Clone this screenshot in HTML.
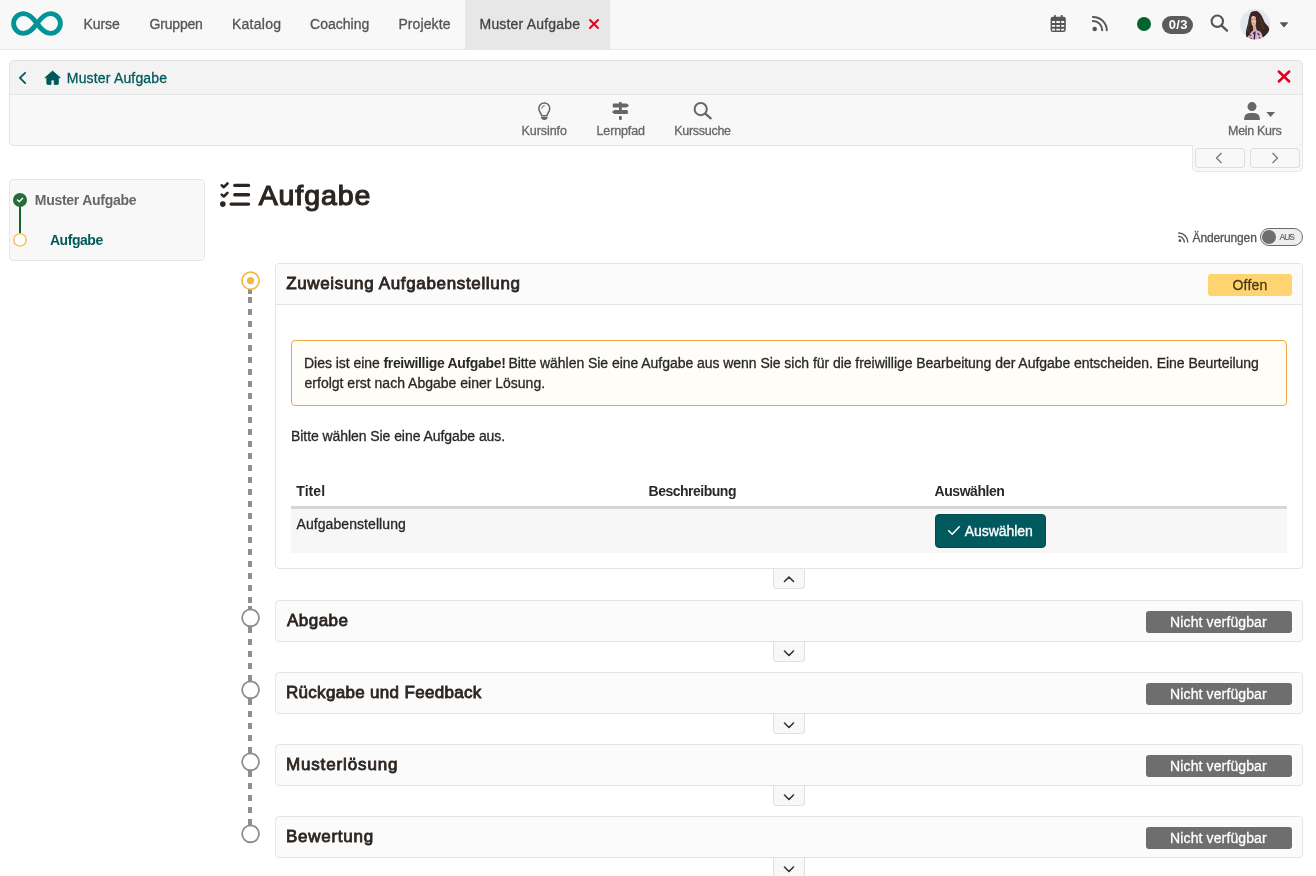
<!DOCTYPE html>
<html lang="de">
<head>
<meta charset="utf-8">
<title>Muster Aufgabe</title>
<style>
html,body{margin:0;padding:0}
body{width:1316px;height:876px;overflow:hidden;position:relative;background:#fff;font-family:"Liberation Sans",sans-serif;font-size:14px;color:#333}
.a{position:absolute;box-sizing:border-box}
.t{position:absolute;white-space:nowrap;line-height:20px;margin:0;padding:0;-webkit-text-stroke:0.3px}
svg{position:absolute;overflow:visible}
#L{position:absolute;left:0;top:0;width:1316px;height:876px;will-change:transform}
.b{font-weight:bold;-webkit-text-stroke:0}
#nav{left:0;top:0;width:1316px;height:50px;background:#f8f8f8;border-bottom:1px solid #e7e7e7}
#tab{left:465px;top:0;width:145px;height:49px;background:#e7e7e7}
#panel{left:9px;top:60px;width:1294px;height:86px;background:#f8f8f8;border:1px solid #e3e3e3;border-radius:4px}
#crumb{left:10px;top:61px;width:1292px;height:34px;background:#f3f3f3;border-bottom:1px solid #e3e3e3;border-radius:3px 3px 0 0}
#pn{left:1192px;top:145px;width:111px;height:27px;background:#f8f8f8;border:1px solid #e7e7e7;border-top:0;border-radius:0 0 5px 5px}
.pb{top:148px;width:50px;height:20px;border:1px solid #ddd;border-radius:3px;background:#f8f8f8}
#menu{left:9px;top:179px;width:196px;height:82px;background:#f8f8f8;border:1px solid #e7e7e7;border-radius:4px}
.box{left:275px;width:1028px;background:#fbfbfb;border:1px solid #e4e4e4;border-radius:4px}
.tg{left:773px;width:32px;height:20px;background:#f8f8f8;border:1px solid #e0e0e0;border-top:0;border-radius:0 0 4px 4px}
.badge{left:1146px;width:146px;height:22px;background:#6e6e6e;border-radius:3px}
.dash{left:248px;width:4px;background:repeating-linear-gradient(to bottom,#8f8f8f 0,#8f8f8f 6px,transparent 6px,transparent 12px)}
.circ{left:241px;width:19px;height:19px;border-radius:50%;border:2px solid #8b8b8b;background:#fff}
</style>
</head>
<body>
<div id="L">
<!-- top navigation -->
<div class="a" id="nav"></div>
<div class="a" id="tab"></div>
<svg style="left:11px;top:11px" width="52" height="25" viewBox="0 0 52 25"><path d="M26 12.5C20 4 16 2.6 12.6 2.6 7 2.6 2.6 7 2.6 12.5S7 22.4 12.6 22.4C16 22.4 20 21 26 12.5S36 2.6 39.4 2.6C45 2.6 49.4 7 49.4 12.5S45 22.4 39.4 22.4C36 22.4 32 21 26 12.5Z" fill="none" stroke="#029397" stroke-width="4.9" stroke-linejoin="round"/></svg>
<span class="t" id="n1" style="left:83.50px;top:14.01px;font-size:14px;color:#555;letter-spacing:-0.080px;">Kurse</span>
<span class="t" id="n2" style="left:149.50px;top:14.01px;font-size:14px;color:#555;letter-spacing:-0.185px;">Gruppen</span>
<span class="t" id="n3" style="left:232.00px;top:14.01px;font-size:14px;color:#555;letter-spacing:0.248px;">Katalog</span>
<span class="t" id="n4" style="left:310.00px;top:14.01px;font-size:14px;color:#555;letter-spacing:0.015px;">Coaching</span>
<span class="t" id="n5" style="left:398.40px;top:14.01px;font-size:14px;color:#555;letter-spacing:0.108px;">Projekte</span>
<span class="t" id="n6" style="left:479.55px;top:14.01px;font-size:14px;color:#444;letter-spacing:0.182px;">Muster Aufgabe</span>
<svg style="left:589px;top:19px" width="10" height="10" viewBox="0 0 10 10"><path d="M1 1L9 9M9 1L1 9" stroke="#e1001c" stroke-width="2" stroke-linecap="round"/></svg>
<svg style="left:1050px;top:14px" width="17" height="19" viewBox="0 0 17 19"><g fill="#555"><rect x="4.050" y="0.900" width="1.800" height="3.500" rx="0.600"/><rect x="10.850" y="0.900" width="1.800" height="3.500" rx="0.600"/><rect x="0.600" y="2.800" width="15.200" height="15.100" rx="2.200"/></g><g fill="#f8f8f8"><rect x="2.000" y="7.100" width="3.100" height="1.800" rx="0.300"/><rect x="2.000" y="11.000" width="3.100" height="1.800" rx="0.300"/><rect x="2.000" y="14.700" width="3.100" height="1.800" rx="0.300"/><rect x="6.300" y="7.100" width="3.600" height="1.800" rx="0.300"/><rect x="6.300" y="11.000" width="3.600" height="1.800" rx="0.300"/><rect x="6.300" y="14.700" width="3.600" height="1.800" rx="0.300"/><rect x="11.100" y="7.100" width="3.100" height="1.800" rx="0.300"/><rect x="11.100" y="11.000" width="3.100" height="1.800" rx="0.300"/><rect x="11.100" y="14.700" width="3.100" height="1.800" rx="0.300"/></g></svg>
<svg style="left:1092px;top:15px" width="17" height="17" viewBox="0 0 17 17"><circle cx="2.700" cy="13.900" r="2.250" fill="#555"/><path d="M0.900 5.900A9.300 9.300 0 0 1 10.200 15.200M0.900 2A13.900 13.200 0 0 1 14.800 15.200" fill="none" stroke="#555" stroke-width="2" stroke-linecap="round"/></svg>
<div class="a" style="left:1137px;top:17px;width:14px;height:14px;border-radius:50%;background:#05632f"></div>
<div class="a" style="left:1162px;top:16px;width:31px;height:18px;border-radius:9px;background:#5b5b5b"></div>
<svg style="left:1210px;top:14px" width="19" height="18" viewBox="0 0 19 18"><circle cx="7.3" cy="7.2" r="5.7" fill="none" stroke="#555" stroke-width="2.1"/><path d="M11.6 11.6L17 16.6" stroke="#555" stroke-width="2.3" stroke-linecap="round"/></svg>
<svg style="left:1240px;top:9px" width="31" height="31" viewBox="0 0 31 31"><defs><clipPath id="avc"><circle cx="15.200" cy="15.200" r="15.200"/></clipPath><filter id="avb" x="-20%" y="-20%" width="140%" height="140%"><feGaussianBlur stdDeviation="0.550"/></filter></defs><g clip-path="url(#avc)"><rect width="31" height="31" fill="#e3e8ee"/><g filter="url(#avb)"><path d="M10.500 4C12 1.800 17 1.300 19 3.500 22 6 23 10 24.500 13 26 16 29.500 17 29.300 21.500 29 25 26 28 24 31H7C5.500 27 5.500 22 7 18 8.500 14 8.500 8 10.500 4Z" fill="#3a2724"/><path d="M11.300 8.500C11.600 6.600 14.800 6.400 15.600 8.300 16.400 10.500 16.300 14 15.600 16.200 14.800 17.800 12.600 17.300 11.800 15.500 11.100 13.500 11 10.500 11.300 8.500Z" fill="#e9b9a6"/><path d="M12.800 16.500L15.600 16.200 16.800 21.500 14.500 23.500 13 21.500Z" fill="#dca996"/><path d="M6.500 31C7 26 9 22.500 12.500 21.500 15 21 18 21.500 20 22.500 22.500 24 23 28 23 31Z" fill="#d7b3c8"/><path d="M9 25L11 27M13 23.500L14.500 25.500M17.500 24L19.500 26.500M10 29L12.500 30.500M19 28.500L21 30" stroke="#5a3a52" stroke-width="1.300" fill="none"/><path d="M15 22.500L14.200 31" stroke="#2c2430" stroke-width="1.300"/><path d="M11.500 10.300H13M14.300 10.300H15.600" stroke="#5a3a35" stroke-width="0.700"/><path d="M12.600 14.300H14.600" stroke="#c9737a" stroke-width="0.800"/><path d="M12 17C10.500 19 9.500 21 7.500 23 6.500 25 6.500 27 7 29 9 26 11 23 13.300 21.300Z" fill="#3a2724"/><path d="M16.300 15C17.500 18 18 20 20.500 22.500 22 25 23 28 23.500 31H26V20L18 12Z" fill="#3a2724"/><path d="M20 9C22 13 21 17 24 20M9.500 12C9 16 7.500 19 7.800 23" stroke="#5b4038" stroke-width="0.900" fill="none"/></g></g></svg>
<svg style="left:1279px;top:22px" width="10" height="6" viewBox="0 0 10 6"><path d="M1.300 0.700H8.700L5 5.100Z" fill="#555" stroke="#555" stroke-width="0.800" stroke-linejoin="round"/></svg>

<span class="t b" id="bd" style="left:1168.70px;top:14.60px;font-size:13px;color:#fff;letter-spacing:0.350px;">0/3</span>
<!-- breadcrumb + toolbar -->
<div class="a" id="panel"></div>
<div class="a" id="crumb"></div>
<svg style="left:18px;top:71px" width="10" height="14" viewBox="0 0 10 14"><path d="M7.200 1.800L1.900 6.950L7.200 12.100" fill="none" stroke="#005a5c" stroke-width="1.8" stroke-linecap="round" stroke-linejoin="round"/></svg>
<svg style="left:44px;top:70px" width="18" height="16" viewBox="0 0 18 16"><path d="M8.6 1L0.8 7.8H2.8V13.6A0.9 0.9 0 0 0 3.7 14.5H7V10H10.2V14.5H13.5A0.9 0.9 0 0 0 14.4 13.6V7.8H16.4Z" fill="#005a5c" stroke="#005a5c" stroke-width="0.8" stroke-linejoin="round"/></svg>
<svg style="left:1277px;top:70px" width="14" height="13" viewBox="0 0 14 13"><path d="M1.8 1.5L12.2 11.5M12.2 1.5L1.8 11.5" stroke="#e1001c" stroke-width="2.5" stroke-linecap="round"/></svg>

<span class="t" id="c1" style="left:66.85px;top:68.01px;font-size:14px;color:#005a5c;letter-spacing:0.164px;">Muster Aufgabe</span>
<svg style="left:537px;top:102px" width="15" height="18" viewBox="0 0 15 18"><path d="M4.600 13.700C4.600 11.500 1.850 10 1.850 6.400A5.450 5.450 0 0 1 12.750 6.400C12.750 10 10 11.500 10 13.700Z" fill="none" stroke="#666" stroke-width="1.500" stroke-linejoin="round"/><path d="M4.700 6.300A2.600 2.600 0 0 1 7.300 3.700" fill="none" stroke="#666" stroke-width="1" stroke-linecap="round"/><path d="M3.900 15.100H10.700A3.400 2.800 0 0 1 3.900 15.100Z" fill="#666"/></svg>
<svg style="left:611px;top:102px" width="19" height="18" viewBox="0 0 19 18"><g fill="#666"><rect x="8" y="0" width="2.800" height="9" rx="0.800"/><rect x="8" y="14" width="2.800" height="3.900" rx="0.800"/><path d="M2.500 1.400H15.700L18.100 3.400L15.700 5.400H2.500A0.700 0.700 0 0 1 1.800 4.700V2.100A0.700 0.700 0 0 1 2.500 1.400Z"/><path d="M16.100 8.100H3.300L0.900 10.100L3.300 12.100H16.100A0.700 0.700 0 0 0 16.800 11.400V8.800A0.700 0.700 0 0 0 16.100 8.100Z"/></g></svg>
<svg style="left:693px;top:101.300px" width="19" height="18" viewBox="0 0 19 18"><circle cx="7.700" cy="8.100" r="6.100" fill="none" stroke="#666" stroke-width="2"/><path d="M12.300 12.700L17.700 17.400" stroke="#666" stroke-width="2.200" stroke-linecap="round"/></svg>
<svg style="left:1244.400px;top:102px" width="32" height="18" viewBox="0 0 32 18"><circle cx="8" cy="4.600" r="4.500" fill="#666"/><path d="M0.200 18V16.500A5.500 5.500 0 0 1 5.700 11H10.300A5.500 5.500 0 0 1 15.800 16.500V18Z" fill="#666"/><path d="M22.300 10H31L26.650 15.100Z" fill="#666"/></svg>

<span class="t" id="k1" style="left:521.60px;top:121.01px;font-size:12.5px;color:#666;letter-spacing:-0.072px;">Kursinfo</span>
<span class="t" id="k2" style="left:596.55px;top:121.01px;font-size:12.5px;color:#666;letter-spacing:-0.129px;">Lernpfad</span>
<span class="t" id="k3" style="left:674.25px;top:121.01px;font-size:12.5px;color:#666;letter-spacing:-0.282px;">Kurssuche</span>
<span class="t" id="k4" style="left:1228.10px;top:121.01px;font-size:12.5px;color:#666;letter-spacing:-0.329px;">Mein Kurs</span>
<div class="a" id="pn"></div>
<div class="a pb" style="left:1195px"></div>
<div class="a pb" style="left:1250px"></div>
<svg style="left:1215px;top:152px" width="8" height="12" viewBox="0 0 8 12"><path d="M6.5 1L1.5 6L6.5 11" fill="none" stroke="#777" stroke-width="1.3"/></svg>
<svg style="left:1271px;top:152px" width="8" height="12" viewBox="0 0 8 12"><path d="M1.5 1L6.5 6L1.5 11" fill="none" stroke="#777" stroke-width="1.3"/></svg>
<!-- menu -->
<div class="a" id="menu"></div>
<div class="a" style="left:19px;top:204px;width:2px;height:30px;background:#17652d"></div>
<div class="a" style="left:13px;top:193px;width:14px;height:14px;border-radius:50%;background:#276c39"></div>
<svg style="left:16px;top:196px" width="8" height="8" viewBox="0 0 8 8"><path d="M1.500 4.100L3.300 5.800L6.600 2.300" fill="none" stroke="#fff" stroke-width="1.400" stroke-linecap="round" stroke-linejoin="round"/></svg>
<svg style="left:12px;top:232px" width="16" height="16" viewBox="0 0 16 16"><circle cx="7.950" cy="7.900" r="6.250" fill="#fdfdfd" stroke="#fbc04c" stroke-width="1.400"/></svg>

<span class="t b" id="m1" style="left:34.75px;top:189.81px;font-size:14px;color:#666;letter-spacing:-0.269px;">Muster Aufgabe</span>
<span class="t b" id="m2" style="left:49.90px;top:229.71px;font-size:14px;color:#005a5c;letter-spacing:-0.436px;">Aufgabe</span>
<!-- title -->
<svg style="left:219px;top:182px" width="32" height="25" viewBox="0 0 32 25"><g fill="none" stroke="#2c2521" stroke-linecap="round" stroke-linejoin="round"><path d="M15.800 3.400H29.500M15.800 12.700H29.500M12.100 22.100H29.500" stroke-width="3.400"/><path d="M2.700 3.300L4.800 5.200L8.500 1.500M2.700 12.600L4.800 14.500L8.500 10.800" stroke-width="2.600"/></g><circle cx="3.800" cy="22.100" r="2.800" fill="#2c2521"/></svg>
<svg style="left:1178px;top:232px" width="12" height="11" viewBox="0 0 12 11"><circle cx="1.900" cy="8.700" r="1.400" fill="#555"/><path d="M0.700 4.500A5.600 5.600 0 0 1 6.300 10.100M0.700 1A9.100 9.100 0 0 1 9.800 10.100" fill="none" stroke="#555" stroke-width="1.400" stroke-linecap="round"/></svg>
<div class="a" style="left:1260px;top:228px;width:43px;height:18px;border:1px solid #6b6b6b;border-radius:9px;background:#eee"></div>
<div class="a" style="left:1262px;top:230px;width:14px;height:14px;border-radius:50%;background:#6e6e6e"></div>

<span class="t" id="h2" style="left:258.65px;top:174.71px;font-size:28.5px;color:#2c2521;letter-spacing:0.916px;line-height:40px;-webkit-text-stroke:1.2px #2c2521;">Aufgabe</span>
<span class="t" id="ch" style="left:1192.55px;top:227.71px;font-size:12px;color:#555;letter-spacing:-0.126px;">Änderungen</span>
<span class="t" id="aus" style="left:1279.50px;top:227.31px;font-size:8.4px;color:#555;letter-spacing:-0.925px;-webkit-text-stroke:0.1px;">AUS</span>
<!-- steps -->
<div class="a" style="left:248px;top:288px;width:4px;height:6px;background:#8f8f8f"></div>
<div class="a dash" style="top:297px;height:306px"></div>
<div class="a" style="left:248px;top:606px;width:4px;height:4px;background:#8f8f8f"></div>
<div class="a dash" style="top:627px;height:198px"></div>
<svg style="left:240px;top:270px" width="21" height="21" viewBox="0 0 21 21"><circle cx="10.550" cy="10.650" r="8.600" fill="#fff" stroke="#f4b740" stroke-width="1.700"/><circle cx="10.550" cy="10.700" r="3.600" fill="#f4b740"/></svg>
<svg style="left:240px;top:607px" width="21" height="21" viewBox="0 0 21 21"><circle cx="10.550" cy="10.800" r="8.450" fill="#fff" stroke="#8c8c8c" stroke-width="1.800"/></svg>
<svg style="left:240px;top:679px" width="21" height="21" viewBox="0 0 21 21"><circle cx="10.550" cy="10.800" r="8.450" fill="#fff" stroke="#8c8c8c" stroke-width="1.800"/></svg>
<svg style="left:240px;top:751px" width="21" height="21" viewBox="0 0 21 21"><circle cx="10.550" cy="10.800" r="8.450" fill="#fff" stroke="#8c8c8c" stroke-width="1.800"/></svg>
<svg style="left:240px;top:823px" width="21" height="21" viewBox="0 0 21 21"><circle cx="10.550" cy="10.800" r="8.450" fill="#fff" stroke="#8c8c8c" stroke-width="1.800"/></svg>
<div class="a box" style="top:263px;height:306px;background:#fff"></div>
<div class="a" style="left:276px;top:264px;width:1026px;height:41px;background:#fbfbfb;border-bottom:1px solid #e4e4e4;border-radius:3px 3px 0 0"></div>
<div class="a" style="left:1208px;top:274px;width:84px;height:22px;background:#fed470;border-radius:3px"></div>
<div class="a" style="left:291px;top:340px;width:996px;height:66px;background:#fffdf8;border:1px solid #f2a643;border-radius:4px"></div>
<div class="a" style="left:291px;top:506px;width:996px;height:3px;background:#d6d6d6"></div>
<div class="a" style="left:291px;top:509px;width:996px;height:44px;background:#f7f7f7"></div>
<div class="a" style="left:935px;top:514px;width:111px;height:34px;background:#00595c;border:1px solid #004c4f;border-radius:4px"></div>
<svg style="left:947px;top:525px" width="14" height="11" viewBox="0 0 14 11"><path d="M1.700 5.700L5.200 9.200L12.300 1.800" fill="none" stroke="#fff" stroke-width="1.600" stroke-linecap="round" stroke-linejoin="round"/></svg>
<div class="a tg" style="top:569px"></div>
<svg style="left:783px;top:575px" width="12" height="9" viewBox="0 0 12 9"><path d="M1.500 6.500L6 2L10.500 6.500" fill="none" stroke="#333" stroke-width="1.600" stroke-linecap="round" stroke-linejoin="round"/></svg>
<div class="a tg" style="top:642px"></div>
<svg style="left:783px;top:649px" width="12" height="9" viewBox="0 0 12 9"><path d="M1.500 2L6 6.500L10.500 2" fill="none" stroke="#333" stroke-width="1.600" stroke-linecap="round" stroke-linejoin="round"/></svg>
<div class="a tg" style="top:714px"></div>
<svg style="left:783px;top:721px" width="12" height="9" viewBox="0 0 12 9"><path d="M1.500 2L6 6.500L10.500 2" fill="none" stroke="#333" stroke-width="1.600" stroke-linecap="round" stroke-linejoin="round"/></svg>
<div class="a tg" style="top:786px"></div>
<svg style="left:783px;top:793px" width="12" height="9" viewBox="0 0 12 9"><path d="M1.500 2L6 6.500L10.500 2" fill="none" stroke="#333" stroke-width="1.600" stroke-linecap="round" stroke-linejoin="round"/></svg>
<div class="a tg" style="top:858px"></div>
<svg style="left:783px;top:865px" width="12" height="9" viewBox="0 0 12 9"><path d="M1.500 2L6 6.500L10.500 2" fill="none" stroke="#333" stroke-width="1.600" stroke-linecap="round" stroke-linejoin="round"/></svg>
<div class="a box" style="top:600px;height:42px"></div>
<div class="a badge" style="top:611px"></div>
<div class="a box" style="top:672px;height:42px"></div>
<div class="a badge" style="top:683px"></div>
<div class="a box" style="top:744px;height:42px"></div>
<div class="a badge" style="top:755px"></div>
<div class="a box" style="top:816px;height:42px"></div>
<div class="a badge" style="top:827px"></div>
<span class="t" id="s1" style="left:286.15px;top:273.91px;font-size:17px;color:#2c2521;letter-spacing:0.658px;-webkit-text-stroke:0.8px #2c2521;">Zuweisung Aufgabenstellung</span>
<span class="t" id="of" style="left:1232.55px;top:274.81px;font-size:14px;color:#4a3a12;letter-spacing:0.168px;">Offen</span>
<span class="t" id="w1" style="left:304.05px;top:353.31px;font-size:14px;color:#282828;letter-spacing:-0.033px;">Dies ist eine</span>
<span class="t b" id="w2" style="left:383.45px;top:353.31px;font-size:14px;color:#282828;letter-spacing:-0.329px;">freiwillige Aufgabe!</span>
<span class="t" id="w3" style="left:508.40px;top:353.31px;font-size:14px;color:#282828;letter-spacing:-0.044px;">Bitte wählen Sie eine Aufgabe aus wenn Sie sich für die freiwillige Bearbeitung der Aufgabe entscheiden. Eine Beurteilung</span>
<span class="t" id="w4" style="left:304.55px;top:372.71px;font-size:14px;color:#282828;letter-spacing:0.001px;">erfolgt erst nach Abgabe einer Lösung.</span>
<span class="t" id="p1" style="left:291.05px;top:425.71px;font-size:14px;color:#282828;letter-spacing:-0.069px;">Bitte wählen Sie eine Aufgabe aus.</span>
<span class="t b" id="th1" style="left:296.30px;top:481.21px;font-size:14px;color:#282828;letter-spacing:0.052px;">Titel</span>
<span class="t b" id="th2" style="left:648.55px;top:481.21px;font-size:14px;color:#282828;letter-spacing:-0.496px;">Beschreibung</span>
<span class="t b" id="th3" style="left:934.60px;top:481.21px;font-size:14px;color:#282828;letter-spacing:-0.468px;">Auswählen</span>
<span class="t" id="td1" style="left:296.55px;top:514.11px;font-size:14px;color:#282828;letter-spacing:0.068px;">Aufgabenstellung</span>
<span class="t" id="bt" style="left:964.75px;top:520.81px;font-size:14px;color:#fff;letter-spacing:-0.061px;-webkit-text-stroke:0.35px #fff;">Auswählen</span>
<span class="t" id="s2" style="left:286.90px;top:610.71px;font-size:17px;color:#2c2521;letter-spacing:0.500px;-webkit-text-stroke:0.8px #2c2521;">Abgabe</span>
<span class="t" id="s3" style="left:285.90px;top:682.71px;font-size:17px;color:#2c2521;letter-spacing:0.322px;-webkit-text-stroke:0.8px #2c2521;">Rückgabe und Feedback</span>
<span class="t" id="s4" style="left:285.90px;top:754.81px;font-size:17px;color:#2c2521;letter-spacing:0.868px;-webkit-text-stroke:0.8px #2c2521;">Musterlösung</span>
<span class="t" id="s5" style="left:285.90px;top:826.81px;font-size:17px;color:#2c2521;letter-spacing:0.748px;-webkit-text-stroke:0.8px #2c2521;">Bewertung</span>
<span class="t" id="nv2" style="left:1170.10px;top:612.11px;font-size:14px;color:#fff;letter-spacing:0.117px;">Nicht verfügbar</span>
<span class="t" id="nv3" style="left:1170.10px;top:684.11px;font-size:14px;color:#fff;letter-spacing:0.117px;">Nicht verfügbar</span>
<span class="t" id="nv4" style="left:1170.10px;top:756.11px;font-size:14px;color:#fff;letter-spacing:0.117px;">Nicht verfügbar</span>
<span class="t" id="nv5" style="left:1170.10px;top:828.11px;font-size:14px;color:#fff;letter-spacing:0.117px;">Nicht verfügbar</span>
</div>
</body>
</html>
